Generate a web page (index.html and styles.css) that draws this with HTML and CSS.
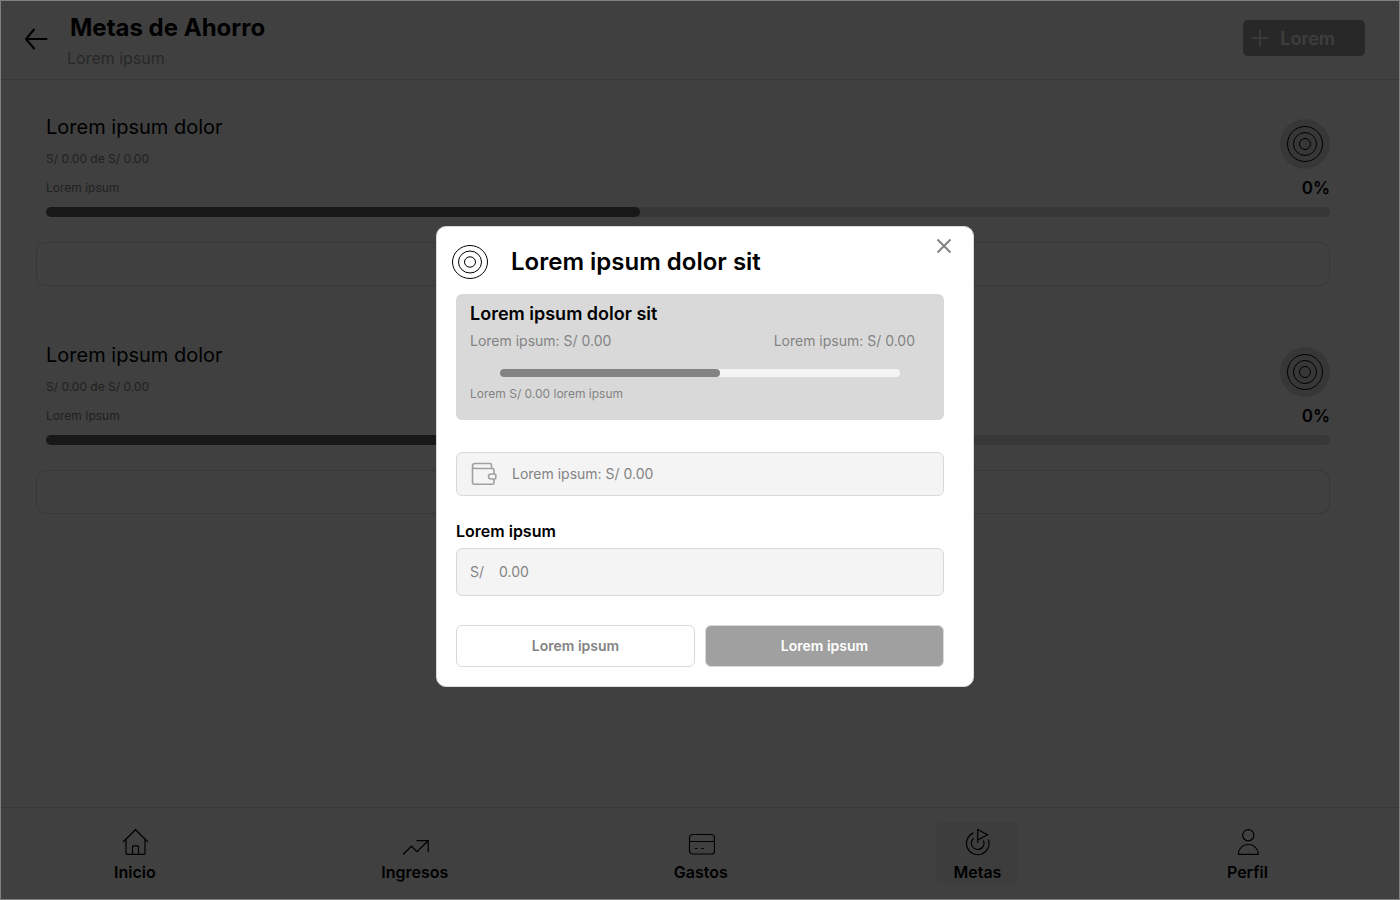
FILE: index.html
```html
<!DOCTYPE html>
<html lang="es">
<head>
<meta charset="utf-8">
<meta name="viewport" content="width=device-width, initial-scale=1">
<title>Metas de Ahorro</title>
<link rel="stylesheet" href="styles.css">
</head>
<body>
<header class="topbar">
  <a class="back" href="#"><svg width="24" height="24" viewBox="0 0 24 24"><path d="M22.500 12H2M10 2.500L2 12l8 9.500"/></svg></a>
  <div class="heading">
    <h1>Metas de Ahorro</h1>
    <p>Lorem ipsum</p>
  </div>
  <button class="add" type="button"><svg width="18" height="18" viewBox="0 0 18 18"><path d="M9 0.500v17M0.500 9h17"/></svg>Lorem</button>
</header>

<main class="goals">
  <article class="goal">
    <div class="goal-info">
      <div class="goal-text">
        <h2>Lorem ipsum dolor</h2>
        <p>S/ 0.00 de S/ 0.00</p>
        <p>Lorem ipsum</p>
      </div>
      <div class="goal-side">
        <span class="goal-icon"><svg width="38" height="38" viewBox="0 0 38 38"><circle cx="19" cy="19" r="17.500"/><circle cx="19" cy="19" r="11.500"/><circle cx="19" cy="19" r="5.500"/></svg></span>
        <strong>0%</strong>
      </div>
    </div>
    <div class="track"><div class="fill" style="width:46.260%"></div></div>
    <div class="goal-box"></div>
  </article>
  <article class="goal">
    <div class="goal-info">
      <div class="goal-text">
        <h2>Lorem ipsum dolor</h2>
        <p>S/ 0.00 de S/ 0.00</p>
        <p>Lorem Ipsum</p>
      </div>
      <div class="goal-side">
        <span class="goal-icon"><svg width="38" height="38" viewBox="0 0 38 38"><circle cx="19" cy="19" r="17.500"/><circle cx="19" cy="19" r="11.500"/><circle cx="19" cy="19" r="5.500"/></svg></span>
        <strong>0%</strong>
      </div>
    </div>
    <div class="track"><div class="fill" style="width:46.260%"></div></div>
    <div class="goal-box"></div>
  </article>
</main>

<nav class="tabs">
  <a href="#"><svg width="28" height="28" viewBox="0 0 28 28"><path d="M2 14L14.500 1.700 27 14M5 11.500v13.800a1 1 0 0 0 1 1h17a1 1 0 0 0 1-1V11.500M11.500 26.300v-7.500a1 1 0 0 1 1-1h4a1 1 0 0 1 1 1v7.500"/></svg>Inicio</a>
  <a href="#"><svg width="28" height="28" viewBox="0 0 28 28"><path d="M2 26.500l8.400-8.300 5.600 5.500L27.200 12.700M15.500 12.700h11.700V24.200"/></svg>Ingresos</a>
  <a href="#"><svg width="28" height="28" viewBox="0 0 28 28"><rect x="2.500" y="6.500" width="25" height="19.500" rx="3.500"/><path d="M2.500 13.500h25M8 20.500h2.500M14.300 20.500h2.500"/></svg>Gastos</a>
  <a href="#" class="active" aria-current="page"><svg width="28" height="28" viewBox="0 0 28 28"><path d="M14.700 15V1.500l9.800 5.200-9.800 5.300M10.600 4.900A11.300 11.300 0 1 0 25.400 11.500M10.700 10.300A6.300 6.300 0 1 0 20.400 12.500"/></svg>Metas</a>
  <a href="#"><svg width="28" height="28" viewBox="0 0 28 28"><circle cx="15.300" cy="7.300" r="5.600"/><path d="M5.500 26.300v-1.500C6 20 10 16.500 15.300 16.500S24.600 20 25.200 24.800v1.500z"/></svg>Perfil</a>
</nav>

<div class="overlay">
  <section class="modal" role="dialog" aria-modal="true" aria-labelledby="modal-title">
    <header class="modal-head">
      <svg class="rings" width="38" height="36" viewBox="0 0 38 36"><ellipse cx="19" cy="18" rx="17.500" ry="16.500"/><ellipse cx="19" cy="18" rx="11.500" ry="11"/><ellipse cx="19" cy="18" rx="5.500" ry="5.200"/></svg>
      <h2 id="modal-title">Lorem ipsum dolor sit</h2>
      <button class="close" type="button"><svg width="16" height="16" viewBox="0 0 16 16"><path d="M1.500 1.500l13 13M14.500 1.500l-13 13"/></svg></button>
    </header>
    <form class="modal-body">
      <div class="summary">
        <h3>Lorem ipsum dolor sit</h3>
        <div class="amounts"><span>Lorem ipsum: S/ 0.00</span><span>Lorem ipsum: S/ 0.00</span></div>
        <div class="summary-track"><div class="summary-fill" style="width:55%"></div></div>
        <p>Lorem S/ 0.00 lorem ipsum</p>
      </div>
      <div class="balance">
        <svg width="26" height="24" viewBox="0 0 26 24"><path d="M20.500 6.500V3A1.500 1.500 0 0 0 19 1.500H4A2.500 2.500 0 0 0 4 6.500H21.500A1.500 1.500 0 0 1 23 8v4M1.500 4V20.500A1.700 1.700 0 0 0 3.200 22.200H21.500A1.500 1.500 0 0 0 23 20.700V17M20 12h3.500a1.300 1.300 0 0 1 1.300 1.300v2.400a1.300 1.300 0 0 1-1.300 1.300H20a2.500 2.500 0 0 1 0-5z"/></svg>
        <span>Lorem ipsum: S/ 0.00</span>
      </div>
      <label class="field-label" for="amount">Lorem ipsum</label>
      <div class="field"><span>S/</span><input id="amount" type="text" inputmode="decimal" placeholder="0.00"></div>
      <div class="actions">
        <button class="secondary" type="button">Lorem ipsum</button>
        <button class="primary" type="submit">Lorem ipsum</button>
      </div>
    </form>
  </section>
</div>
</body>
</html>
```

FILE: styles.css
```css
* { box-sizing: border-box; }
body {
  margin: 0;
  min-height: 100vh;
  display: flex;
  flex-direction: column;
  background: #fff;
  color: #000;
  font-family: Inter, "Liberation Sans", sans-serif;
}
h1, h2, h3, p { margin: 0; }
button, input { font-family: inherit; }
svg { display: block; flex: none; fill: none; stroke: currentColor; }
a { color: inherit; text-decoration: none; }

.topbar {
  display: flex;
  align-items: flex-start;
  padding: 13px 35px 11px 24px;
  border-bottom: 1px solid #d9d9d9;
}
.back { padding: 14px 19px 0 0; }
.back svg { stroke-width: 2; stroke-linecap: round; stroke-linejoin: round; }
.heading { flex: 1; }
.heading h1 { padding-left: 3px; font-size: 24px; line-height: 30px; font-weight: 700; }
.heading p { margin-top: 5px; font-size: 16px; line-height: 20px; color: #a0a0a0; }
.add {
  display: flex;
  align-items: center;
  gap: 11px;
  margin-top: 7px;
  padding: 0 30px 0 8px;
  height: 36px;
  border: 0;
  border-radius: 5px;
  background: #a0a0a0;
  color: #f4f4f4;
  font-size: 18px;
  font-weight: 600;
}
.add svg { stroke-width: 1.5; }

.goals {
  flex: 1;
  display: flex;
  flex-direction: column;
  gap: 57px;
  padding: 35px 70px 35px 36px;
}
.goal-info { display: flex; justify-content: space-between; padding-left: 10px; }
.goal-text { display: flex; flex-direction: column; gap: 13px; }
.goal-text h2 { margin-bottom: -1px; font-size: 20px; line-height: 24px; font-weight: 400; }
.goal-text p { font-size: 12px; line-height: 16px; color: #838383; }
.goal-side { display: flex; flex-direction: column; align-items: flex-end; gap: 8px; padding-top: 4px; }
.goal-icon {
  display: grid;
  place-items: center;
  width: 50px;
  height: 50px;
  border-radius: 50%;
  background: #d9d9d9;
}
.goal-side strong { font-size: 17px; line-height: 22px; font-weight: 600; }
.track { margin: 8px 0 25px 10px; height: 10px; border-radius: 5px; background: #d9d9d9; }
.fill { height: 100%; border-radius: 5px; background: #606060; }
.goal-box { height: 44px; border: 1px solid #d9d9d9; border-radius: 10px; }

.tabs {
  display: flex;
  justify-content: space-between;
  padding: 14px 115px 16px 97px;
  border-top: 1px solid #d9d9d9;
}
.tabs a {
  display: flex;
  flex-direction: column;
  align-items: center;
  gap: 6px;
  padding: 6px 17px 2px;
  border-radius: 5px;
  font-size: 16px;
  line-height: 20px;
  font-weight: 600;
}
.tabs svg { stroke-width: 1.2; }
.tabs .active { background: #f4f4f4; }

.overlay {
  position: fixed;
  inset: 0;
  display: grid;
  place-items: center;
  padding: 13px 0 0 10px;
  border: 1px solid #808080;
  background: rgba(0, 0, 0, 0.75);
}
.modal {
  width: 538px;
  max-width: 100%;
  border: 1px solid #d9d9d9;
  border-radius: 10px;
  background: #fff;
}
.modal-head { display: flex; align-items: flex-start; padding: 11px 21px 0 14px; }
.rings { margin-top: 6px; }
.modal-head h2 {
  flex: 1;
  padding: 9px 0 0 22px;
  font-size: 24px;
  line-height: 30px;
  font-weight: 600;
}
.close { padding: 0; border: 0; background: none; color: #838383; }
.close svg { stroke-width: 2; }
.modal-body { padding: 14px 29px 19px 19px; }
.summary { padding: 9px 29px 18px 14px; border-radius: 6px; background: #d9d9d9; color: #838383; }
.summary h3 { color: #000; font-size: 18px; line-height: 22px; font-weight: 600; }
.amounts { display: flex; justify-content: space-between; margin-top: 6px; font-size: 14px; line-height: 20px; }
.summary-track { margin: 18px 15px 9px 30px; height: 8px; border-radius: 4px; background: #f4f4f4; }
.summary-fill { height: 100%; border-radius: 4px; background: #838383; }
.summary p { font-size: 12px; line-height: 16px; }
.balance {
  display: flex;
  align-items: center;
  gap: 15px;
  margin-top: 32px;
  padding: 0 14px;
  height: 44px;
  border: 1px solid #d9d9d9;
  border-radius: 6px;
  background: #f4f4f4;
  color: #838383;
  font-size: 14px;
}
.balance svg { stroke: #a0a0a0; stroke-width: 1.6; }
.balance span { padding-bottom: 2px; }
.field-label { display: block; margin: 25px 0 7px; font-size: 16px; line-height: 20px; font-weight: 600; }
.field {
  display: flex;
  align-items: center;
  gap: 15px;
  height: 48px;
  padding: 0 13px 2px;
  border: 1px solid #d9d9d9;
  border-radius: 6px;
  background: #f4f4f4;
  color: #838383;
  font-size: 14px;
}
.field input {
  flex: 1;
  min-width: 0;
  padding: 0;
  border: 0;
  outline: 0;
  background: none;
  color: inherit;
  font-size: 14px;
}
.field input::placeholder { color: #838383; opacity: 1; }
.actions { display: grid; grid-template-columns: 1fr 1fr; gap: 10px; margin-top: 29px; }
.actions button {
  height: 42px;
  padding: 0 0 2px;
  border: 1px solid #d9d9d9;
  border-radius: 6px;
  font-size: 14px;
  font-weight: 600;
}
.secondary { background: #fff; color: #838383; }
.primary { background: #a0a0a0; color: #fff; }
```
